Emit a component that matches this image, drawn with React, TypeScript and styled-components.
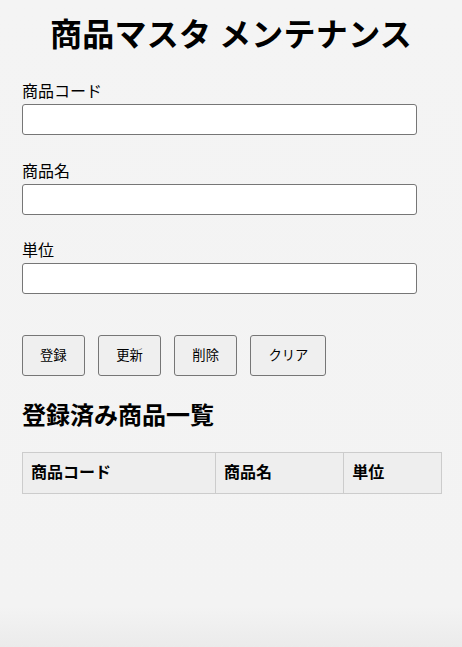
import React from 'react'
import styled, { createGlobalStyle } from 'styled-components'

const GlobalStyle = createGlobalStyle`
  html, body {
    margin: 0;
    padding: 0;
  }
  body {
    min-height: 100vh;
    background: linear-gradient(to bottom, #f4f4f4 0, #f3f3f3 calc(100% - 40px), #ebebeb 100%);
    font-family: "Noto Sans CJK JP", "Noto Sans", sans-serif;
    color: #000;
  }
`

const Page = styled.div`
  padding: 12px 22px 40px 22px;
`

const Title = styled.h1`
  margin: 0 -22px 28px;
  font-size: 32px;
  line-height: 40px;
  font-weight: 700;
  letter-spacing: 0.3px;
  text-align: center;
`

const Form = styled.div`
  display: flex;
  flex-direction: column;
  gap: 24.5px;
`

const Field = styled.div`
  display: flex;
  flex-direction: column;
`

const Label = styled.label`
  font-size: 16px;
  line-height: 22px;
  padding-bottom: 2px;
  margin-top: -1px;
  margin-bottom: 1px;
`

const Input = styled.input`
  box-sizing: border-box;
  width: 394.5px;
  height: 31px;
  padding: 6px;
  border: 1px solid #767676;
  border-radius: 3px;
  background: #fff;
  font-size: 14px;
  font-family: inherit;
`

const Buttons = styled.div`
  display: flex;
  gap: 13.5px;
  margin-top: 41px;
`

const Button = styled.button`
  box-sizing: border-box;
  height: 40.5px;
  padding: 0 17px 1px;
  border: 1px solid #767676;
  border-radius: 3px;
  background: #efefef;
  font-family: inherit;
  font-size: 13.33px;
  color: #000;
  cursor: pointer;
`

const SubTitle = styled.h2`
  margin: 23px 0 23px;
  font-size: 24px;
  line-height: 30px;
  font-weight: 700;
`

const Table = styled.table`
  width: 419.5px;
  border-collapse: collapse;
`

const Th = styled.th<{ w: number }>`
  width: ${({ w }) => w}px;
  box-sizing: border-box;
  height: 41px;
  padding: 0 8px 3px;
  border: 1px solid #cccccc;
  background: #eeeeee;
  text-align: left;
  font-size: 16px;
  font-weight: 700;
`

const fields = ['商品コード', '商品名', '単位']
const actions = ['登録', '更新', '削除', 'クリア']
const columns = [
  { title: '商品コード', w: 193.5 },
  { title: '商品名', w: 128.5 },
  { title: '単位', w: 97.5 },
]

const App: React.FC = () => {
  return (
    <>
      <GlobalStyle />
      <Page>
        <Title>商品マスタ メンテナンス</Title>
        <Form>
          {fields.map((f) => (
            <Field key={f}>
              <Label>{f}</Label>
              <Input type="text" />
            </Field>
          ))}
        </Form>
        <Buttons>
          {actions.map((a) => (
            <Button key={a}>{a}</Button>
          ))}
        </Buttons>
        <SubTitle>登録済み商品一覧</SubTitle>
        <Table>
          <thead>
            <tr>
              {columns.map((c) => (
                <Th key={c.title} w={c.w}>{c.title}</Th>
              ))}
            </tr>
          </thead>
          <tbody></tbody>
        </Table>
      </Page>
    </>
  )
}

export default App
